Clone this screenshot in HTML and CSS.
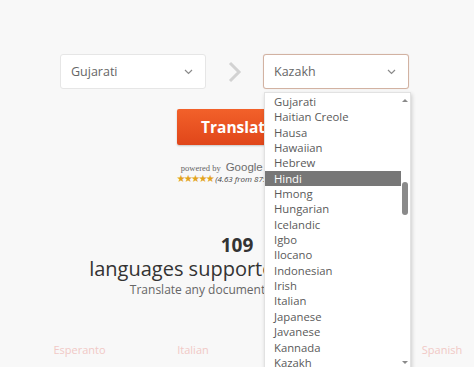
FILE: index.html
```html
<!DOCTYPE html>
<html>
<head>
<meta charset="utf-8">
<link rel="stylesheet" href="styles.css">
</head>
<body>
<div class="page">
  <div class="selectors">
    <div class="select">
      <span>Gujarati</span>
      <svg class="chev" width="9" height="6" viewBox="0 0 9 6"><polyline points="1,1 4.5,4.5 8,1" fill="none" stroke="#8a8a8a" stroke-width="1.2"/></svg>
    </div>
    <div class="swap">
      <svg width="14" height="22" viewBox="0 0 14 22"><polyline points="2,2 11,11 2,20" fill="none" stroke="#d2d2d2" stroke-width="3"/></svg>
    </div>
    <div class="select target">
      <span>Kazakh</span>
      <svg class="chev" width="9" height="6" viewBox="0 0 9 6"><polyline points="1,1 4.5,4.5 8,1" fill="none" stroke="#8a8a8a" stroke-width="1.2"/></svg>
      <div class="dropdown">
        <ul class="options">
          <li>Gujarati</li>
          <li>Haitian Creole</li>
          <li>Hausa</li>
          <li>Hawaiian</li>
          <li>Hebrew</li>
          <li class="active">Hindi</li>
          <li>Hmong</li>
          <li>Hungarian</li>
          <li>Icelandic</li>
          <li>Igbo</li>
          <li>Ilocano</li>
          <li>Indonesian</li>
          <li>Irish</li>
          <li>Italian</li>
          <li>Japanese</li>
          <li>Javanese</li>
          <li>Kannada</li>
          <li>Kazakh</li>
        </ul>
        <div class="scrollbar">
          <span class="arrow up"></span>
          <span class="thumb"></span>
          <span class="arrow down"></span>
        </div>
      </div>
    </div>
  </div>

  <div class="action">
    <button class="translate">Translate</button>
  </div>

  <div class="powered">
    <span class="by">powered by</span>
    <span class="google">Google Translate</span>
  </div>
  <div class="rating">
    <span class="stars">★★★★★</span>
    <span class="score">(4.63 from 875 reviews)</span>
  </div>

  <div class="stats">
    <div class="count">109</div>
    <div class="label">languages supported worldwide</div>
    <div class="sub">Translate any document's content in seconds</div>
  </div>

  <div class="langs">
    <span>Esperanto</span>
    <span>Italian</span>
    <span>Russian</span>
    <span>Spanish</span>
  </div>
</div>
</body>
</html>
```

FILE: styles.css
```css
* { box-sizing: border-box; }
html, body { margin: 0; padding: 0; }
body {
  background: #f8f8f8;
  font-family: "Open Sans", "Noto Sans", sans-serif;
  color: #555;
  width: 474px;
  height: 367px;
  overflow: hidden;
}
.page {
  padding-top: 54px;
}
.selectors {
  display: flex;
  justify-content: center;
  align-items: center;
  padding-right: 5px;
}
.select {
  position: relative;
  width: 146px;
  height: 35px;
  background: #fff;
  border: 1px solid #e6e6e6;
  border-radius: 3px;
  display: flex;
  align-items: center;
  justify-content: space-between;
  padding: 0 12px 0 10px;
  font-size: 12.5px;
  color: #666;
}
.select.target {
  border-color: #d2b2a2;
  box-shadow: 0 0 1px rgba(190,140,120,0.4);
}
.swap {
  width: 57px;
  display: flex;
  justify-content: center;
  padding-left: 1px;
}
.swap svg { display: block; }
.chev { display: block; }

.dropdown {
  position: absolute;
  top: 37px;
  left: 0;
  width: 147px;
  height: 290px;
  background: #fff;
  border: 1px solid #e2e2e2;
  box-shadow: 1px 2px 4px rgba(0,0,0,0.18);
  display: flex;
  z-index: 5;
}
.options {
  list-style: none;
  margin: 0;
  padding: 1px 0 0 0;
  flex: 1;
}
.options li {
  height: 15.35px;
  line-height: 15.35px;
  padding-left: 9px;
  font-size: 11.3px;
  color: #5a5a5a;
  white-space: nowrap;
}
.options li.active {
  background: #777;
  color: #fff;
}
.scrollbar {
  width: 9px;
  position: relative;
  background: #fff;
}
.thumb {
  position: absolute;
  left: 1px;
  top: 89px;
  width: 6px;
  height: 33px;
  border-radius: 3px;
  background: #8a8a8a;
}
.arrow {
  position: absolute;
  left: 1px;
  width: 0;
  height: 0;
  border-left: 3px solid transparent;
  border-right: 3px solid transparent;
}
.arrow.up { top: 6px; border-bottom: 3px solid #8a8a8a; }
.arrow.down { top: 268px; border-top: 3px solid #8a8a8a; }

.action {
  display: flex;
  justify-content: center;
  margin-top: 20px;
}
.translate {
  width: 120px;
  height: 36px;
  border: none;
  border-radius: 2px;
  background: linear-gradient(#f2612a, #e0461a);
  color: #fff;
  font-family: "Open Sans", sans-serif;
  font-weight: 700;
  font-size: 15.5px;
  padding: 0 0 0 24px;
  text-align: left;
  box-shadow: 0 1px 2px rgba(0,0,0,0.2);
}
.powered {
  display: flex;
  justify-content: center;
  align-items: baseline;
  gap: 5px;
  margin-top: 16px;
  padding-left: 20px;
}
.powered .by {
  font-family: "Liberation Serif", serif;
  font-size: 8.5px;
  color: #666;
}
.powered .google {
  font-family: "Liberation Sans", Arial, sans-serif;
  font-size: 11.5px;
  color: #6d6d6d;
}
.rating {
  display: flex;
  justify-content: center;
  align-items: center;
  gap: 2px;
  margin-top: 0;
  padding-left: 0;
}
.stars {
  font-family: "DejaVu Sans", sans-serif;
  font-size: 10px;
  color: #e3a41c;
  letter-spacing: -1.6px;
}
.score {
  font-size: 8px;
  font-style: italic;
  color: #444;
}
.stats {
  text-align: center;
  margin-top: 51px;
}
.count {
  font-size: 19px;
  font-weight: 700;
  color: #333;
  line-height: 21px;
}
.label {
  font-size: 20px;
  color: #333;
  line-height: 25px;
  padding-left: 3px;
}
.sub {
  font-size: 12px;
  color: #666;
  line-height: 16px;
  margin-top: 1px;
  padding-left: 38px;
}
.langs {
  display: grid;
  grid-template-columns: 107px 120px 129px 120px;
  justify-items: center;
  margin-top: 44px;
  padding-left: 26px;
  font-size: 11px;
  color: #f1c9c6;
}
```
